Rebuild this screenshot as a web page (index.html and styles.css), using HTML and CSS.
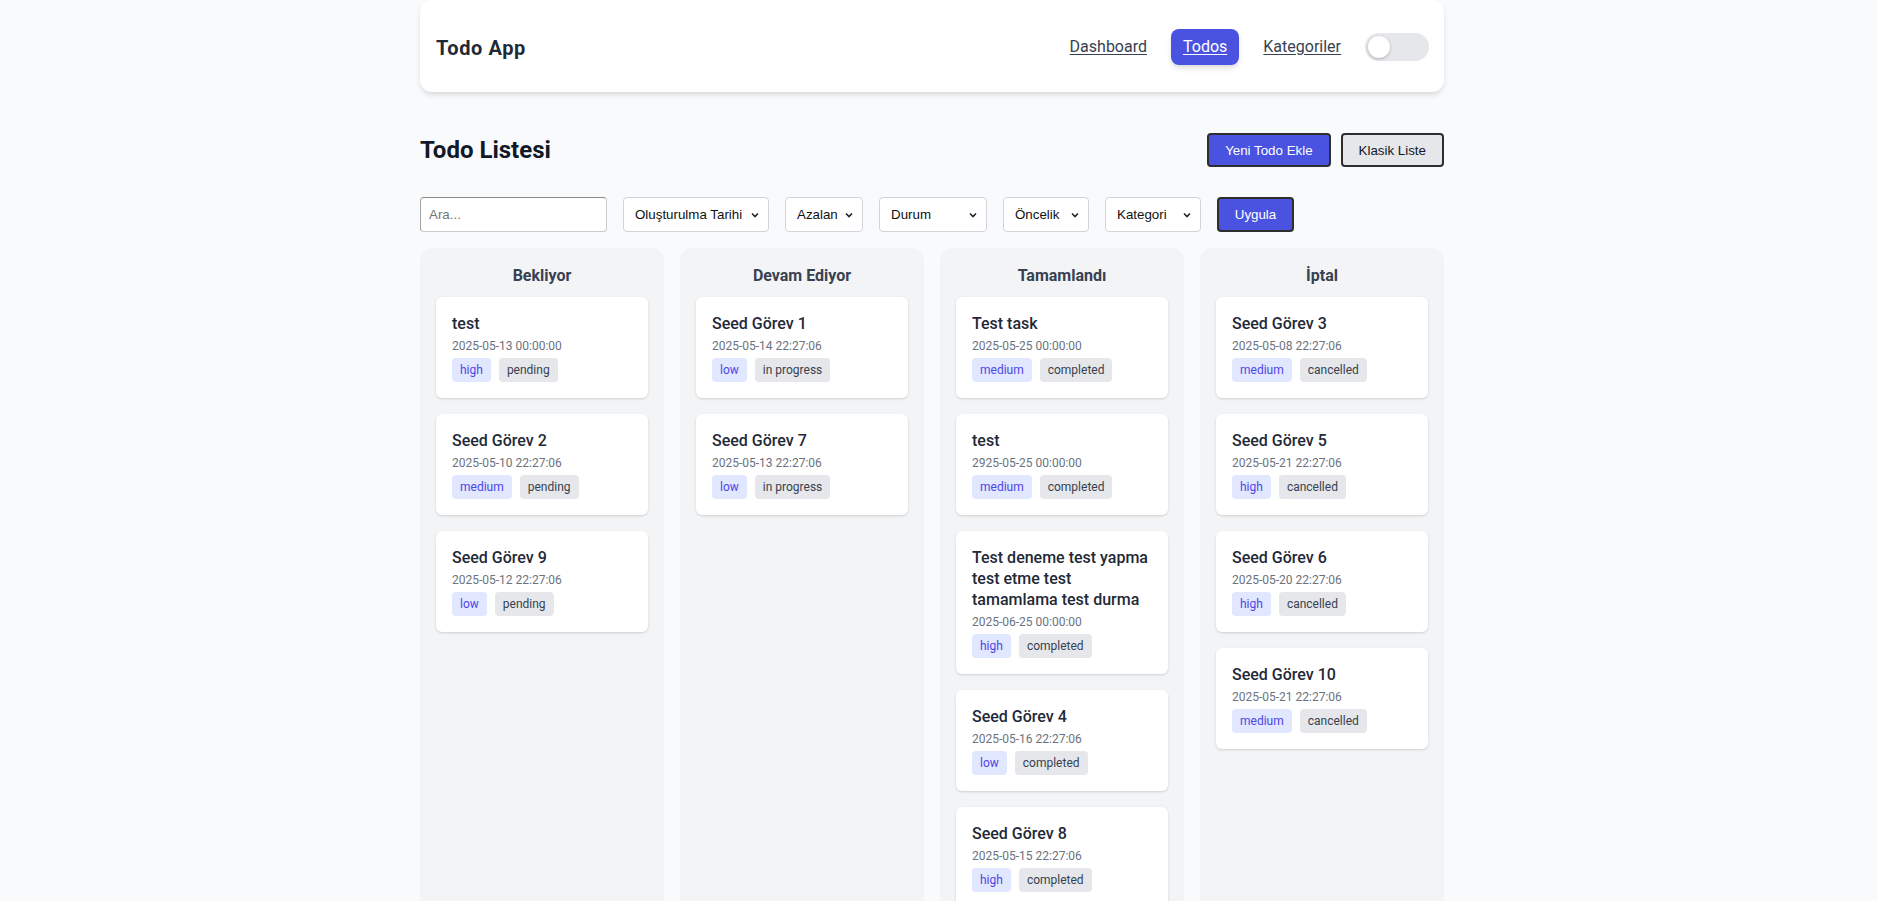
FILE: index.html
```html
<!DOCTYPE html>
<html lang="tr">
<head>
<meta charset="utf-8">
<title>Todo App</title>
<link rel="stylesheet" href="styles.css">
</head>
<body>
<div class="page">
  <header class="topbar">
    <div class="brand">Todo App</div>
    <nav class="nav">
      <a href="#" class="nav-link">Dashboard</a>
      <a href="#" class="nav-link active">Todos</a>
      <a href="#" class="nav-link">Kategoriler</a>
      <span class="toggle"><span class="knob"></span></span>
    </nav>
  </header>

  <main class="main">
    <div class="title-row">
      <h1 class="page-title">Todo Listesi</h1>
      <div class="actions">
        <button class="btn btn-primary" type="button">Yeni Todo Ekle</button>
        <button class="btn btn-secondary" type="button">Klasik Liste</button>
      </div>
    </div>

    <form class="filters">
      <input class="search" type="text" placeholder="Ara...">
      <select class="sel sel-sort"><option>Oluşturulma Tarihi</option></select>
      <select class="sel sel-order"><option>Azalan</option></select>
      <select class="sel sel-status"><option>Durum</option></select>
      <select class="sel sel-priority"><option>Öncelik</option></select>
      <select class="sel sel-category"><option>Kategori</option></select>
      <button class="btn btn-primary btn-apply" type="button">Uygula</button>
    </form>

    <div class="board">
      <section class="column">
        <h2 class="col-title">Bekliyor</h2>
        <div class="cards">
          <article class="card"><h3 class="card-title">test</h3><div class="card-date">2025-05-13 00:00:00</div><div class="badges"><span class="badge prio">high</span><span class="badge status">pending</span></div></article>
          <article class="card"><h3 class="card-title">Seed Görev 2</h3><div class="card-date">2025-05-10 22:27:06</div><div class="badges"><span class="badge prio">medium</span><span class="badge status">pending</span></div></article>
          <article class="card"><h3 class="card-title">Seed Görev 9</h3><div class="card-date">2025-05-12 22:27:06</div><div class="badges"><span class="badge prio">low</span><span class="badge status">pending</span></div></article>
        </div>
      </section>
      <section class="column">
        <h2 class="col-title">Devam Ediyor</h2>
        <div class="cards">
          <article class="card"><h3 class="card-title">Seed Görev 1</h3><div class="card-date">2025-05-14 22:27:06</div><div class="badges"><span class="badge prio">low</span><span class="badge status">in progress</span></div></article>
          <article class="card"><h3 class="card-title">Seed Görev 7</h3><div class="card-date">2025-05-13 22:27:06</div><div class="badges"><span class="badge prio">low</span><span class="badge status">in progress</span></div></article>
        </div>
      </section>
      <section class="column">
        <h2 class="col-title">Tamamlandı</h2>
        <div class="cards">
          <article class="card"><h3 class="card-title">Test task</h3><div class="card-date">2025-05-25 00:00:00</div><div class="badges"><span class="badge prio">medium</span><span class="badge status">completed</span></div></article>
          <article class="card"><h3 class="card-title">test</h3><div class="card-date">2925-05-25 00:00:00</div><div class="badges"><span class="badge prio">medium</span><span class="badge status">completed</span></div></article>
          <article class="card"><h3 class="card-title">Test deneme test yapma test etme test tamamlama test durma</h3><div class="card-date">2025-06-25 00:00:00</div><div class="badges"><span class="badge prio">high</span><span class="badge status">completed</span></div></article>
          <article class="card"><h3 class="card-title">Seed Görev 4</h3><div class="card-date">2025-05-16 22:27:06</div><div class="badges"><span class="badge prio">low</span><span class="badge status">completed</span></div></article>
          <article class="card"><h3 class="card-title">Seed Görev 8</h3><div class="card-date">2025-05-15 22:27:06</div><div class="badges"><span class="badge prio">high</span><span class="badge status">completed</span></div></article>
        </div>
      </section>
      <section class="column">
        <h2 class="col-title">İptal</h2>
        <div class="cards">
          <article class="card"><h3 class="card-title">Seed Görev 3</h3><div class="card-date">2025-05-08 22:27:06</div><div class="badges"><span class="badge prio">medium</span><span class="badge status">cancelled</span></div></article>
          <article class="card"><h3 class="card-title">Seed Görev 5</h3><div class="card-date">2025-05-21 22:27:06</div><div class="badges"><span class="badge prio">high</span><span class="badge status">cancelled</span></div></article>
          <article class="card"><h3 class="card-title">Seed Görev 6</h3><div class="card-date">2025-05-20 22:27:06</div><div class="badges"><span class="badge prio">high</span><span class="badge status">cancelled</span></div></article>
          <article class="card"><h3 class="card-title">Seed Görev 10</h3><div class="card-date">2025-05-21 22:27:06</div><div class="badges"><span class="badge prio">medium</span><span class="badge status">cancelled</span></div></article>
        </div>
      </section>
    </div>
  </main>
</div>
</body>
</html>
```

FILE: styles.css
```css
* { box-sizing: border-box; }

html, body {
  margin: 0;
  padding: 0;
  background: #f9fafb;
}

body {
  font-family: Roboto, "Noto Sans", "Liberation Sans", sans-serif;
  color: #1f2937;
  padding-right: 14px;
}

.page {
  width: 1024px;
  margin: 0 auto;
  padding-bottom: 24px;
}

/* ---------- top bar ---------- */
.topbar {
  height: 92px;
  background: #ffffff;
  border-radius: 12px;
  box-shadow: 0 4px 6px -1px rgba(0,0,0,0.10), 0 2px 4px -1px rgba(0,0,0,0.06);
  display: flex;
  align-items: center;
  justify-content: space-between;
  padding: 2px 15px 0 16px;
}

.brand {
  font-size: 20px;
  font-weight: 700;
  color: #1f2937;
  letter-spacing: 0.6px;
  padding-top: 1px;
}

.nav {
  display: flex;
  align-items: center;
  gap: 24px;
}

.nav-link {
  font-size: 16px;
  line-height: 24px;
  color: #374151;
  text-decoration: underline;
  text-underline-offset: 2px;
}

.nav-link.active {
  background: #4953e0;
  color: #ffffff;
  padding: 6px 12px;
  border-radius: 8px;
  box-shadow: 0 4px 6px -1px rgba(0,0,0,0.12), 0 2px 4px -1px rgba(0,0,0,0.06);
}

.toggle {
  width: 64px;
  height: 28px;
  border-radius: 14px;
  background: #e5e7eb;
  display: flex;
  align-items: center;
  padding-left: 3px;
}

.knob {
  width: 22px;
  height: 22px;
  border-radius: 50%;
  background: #ffffff;
  box-shadow: 0 1px 3px rgba(0,0,0,0.25);
}

/* ---------- title row ---------- */
.main {
  padding-top: 41px;
}

.title-row {
  display: flex;
  align-items: center;
  justify-content: space-between;
  height: 34px;
}

.page-title {
  margin: 0;
  font-size: 24px;
  font-weight: 700;
  color: #111827;
}

.actions {
  display: flex;
  gap: 10px;
}

.btn {
  font-family: "Liberation Sans", Arial, sans-serif;
  font-size: 13.33px;
  height: 34px;
  padding: 0 16px;
  border: 2px solid #2e2e2e;
  border-radius: 4px;
  cursor: pointer;
}

.btn-primary {
  background: #4953e0;
  color: #ffffff;
}

.btn-secondary {
  background: #e5e7eb;
  color: #111827;
}

/* ---------- filters ---------- */
.filters {
  display: flex;
  gap: 16px;
  margin-top: 30px;
  height: 35px;
}

.search {
  width: 187px;
  height: 35px;
  font-family: "Liberation Sans", Arial, sans-serif;
  font-size: 13.33px;
  padding: 0 8px;
  border: 1px solid #c9ccd1;
  border-top-color: #8a8a8a;
  border-left-color: #a3a3a3;
  border-radius: 4px;
  background: #ffffff;
  color: #111;
}

.search::placeholder {
  color: #757575;
}

.sel {
  appearance: none;
  -webkit-appearance: none;
  height: 35px;
  font-family: "Liberation Sans", Arial, sans-serif;
  font-size: 13.33px;
  color: #111;
  padding: 0 20px 0 11px;
  border: 1px solid #d1d5db;
  border-radius: 4px;
  background-color: #ffffff;
  background-image: url("data:image/svg+xml;utf8,<svg xmlns='http://www.w3.org/2000/svg' width='8' height='6' viewBox='0 0 8 6'><path d='M1 1.5 L4 4.5 L7 1.5' fill='none' stroke='%23222' stroke-width='1.6'/></svg>");
  background-repeat: no-repeat;
  background-position: right 9px center;
}

.sel-sort { width: 146px; }
.sel-order { width: 78px; }
.sel-status { width: 108px; }
.sel-priority { width: 86px; }
.sel-category { width: 96px; }

.btn-apply {
  width: 77px;
  height: 35px;
  padding: 0;
}

/* ---------- board ---------- */
.board {
  display: grid;
  grid-template-columns: repeat(4, 1fr);
  gap: 16px;
  margin-top: 16px;
}

.column {
  background: #f3f4f6;
  border-radius: 12px;
  padding: 16px;
}

.col-title {
  margin: 0 0 9px;
  text-align: center;
  font-size: 16px;
  line-height: 24px;
  font-weight: 700;
  color: #374151;
}

.cards {
  display: flex;
  flex-direction: column;
  gap: 16px;
}

.card {
  background: #ffffff;
  border-radius: 6px;
  padding: 16px;
  box-shadow: 0 1px 3px rgba(0,0,0,0.10), 0 1px 2px rgba(0,0,0,0.06);
}

.card-title {
  margin: 0 0 4px;
  font-size: 16px;
  line-height: 21px;
  font-weight: 500;
  color: #1f2937;
}

.card-date {
  font-size: 12px;
  line-height: 16px;
  color: #6b7280;
  margin-bottom: 4px;
}

.badges {
  display: flex;
  gap: 8px;
}

.badge {
  font-size: 12px;
  line-height: 16px;
  padding: 4px 8px;
  border-radius: 4px;
}

.badge.prio {
  background: #e0e7ff;
  color: #4f46e5;
}

.badge.status {
  background: #e5e7eb;
  color: #374151;
}
```
